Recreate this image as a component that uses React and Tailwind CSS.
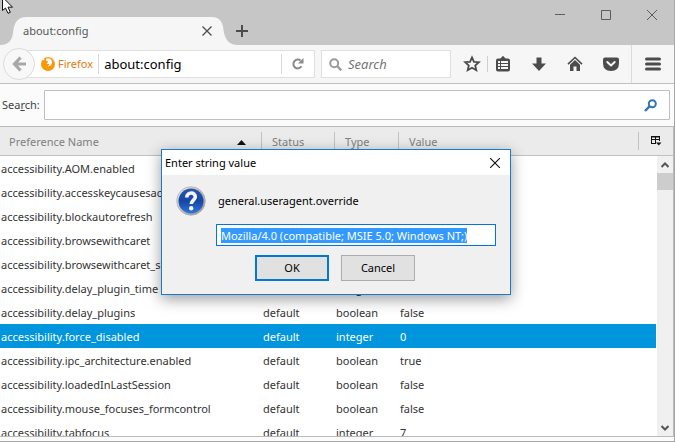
import { useEffect, useRef } from 'react';

const rows = [
  ['accessibility.AOM.enabled', 'default', 'boolean', 'false'],
  ['accessibility.accesskeycausesactivation', 'default', 'boolean', 'true'],
  ['accessibility.blockautorefresh', 'default', 'boolean', 'false'],
  ['accessibility.browsewithcaret', 'default', 'boolean', 'false'],
  ['accessibility.browsewithcaret_shortcut.enabled', 'default', 'boolean', 'true'],
  ['accessibility.delay_plugin_time', 'default', 'integer', '10000'],
  ['accessibility.delay_plugins', 'default', 'boolean', 'false'],
  ['accessibility.force_disabled', 'default', 'integer', '0'],
  ['accessibility.ipc_architecture.enabled', 'default', 'boolean', 'true'],
  ['accessibility.loadedInLastSession', 'default', 'boolean', 'false'],
  ['accessibility.mouse_focuses_formcontrol', 'default', 'boolean', 'false'],
  ['accessibility.tabfocus', 'default', 'integer', '7'],
];

function TitleBar() {
  return (
    <header className="flex h-[45px] shrink-0 items-end bg-[#c6c6c6]">
      <div className="relative flex h-7 w-[238px] items-center pr-[26px] pl-[23px]">
        <svg className="absolute inset-0" width="238" height="28" aria-hidden="true">
          <path d="M0 28C8 28 12 24 13 16C14 6 17 0 27 0H211C221 0 223 6 224 16C226 24 230 28 238 28Z" fill="#f6f6f6" />
        </svg>
        <span className="relative flex-1 text-[11px] leading-4 text-[#555]">about:config</span>
        <button className="relative" aria-label="Close tab">
          <svg width="10" height="10" viewBox="0 0 10 10" className="block" stroke="#4c4c4c" strokeWidth="1.3"><path d="M0.5 .5L9.5 9.5M9.5 .5L.5 9.5" /></svg>
        </button>
      </div>
      <button className="mb-2 -ml-0.5" aria-label="New tab">
        <svg width="12" height="12" className="block" stroke="#4c4c4c" strokeWidth="2"><path d="M6 0V12M0 6H12" /></svg>
      </button>
      <div className="ml-auto flex gap-9 self-start pt-[10px] pr-[17px]">
        <button aria-label="Minimize"><svg width="10" height="10" className="block" stroke="#5c5c5c"><path d="M0 4.5H10" /></svg></button>
        <button aria-label="Maximize"><svg width="10" height="10" className="block" stroke="#5c5c5c" fill="none"><path d="M.5 .5H9.5V9.5H.5Z" /></svg></button>
        <button aria-label="Close"><svg width="10" height="10" className="block" stroke="#5c5c5c"><path d="M0 0L10 10M10 0L0 10" /></svg></button>
      </div>
    </header>
  );
}

function Toolbar() {
  return (
    <nav className="flex h-[39px] shrink-0 items-center border-b border-[#c0c0c0] bg-[#f6f6f6] pl-[3px]">
      <button className="relative z-10 flex size-8 shrink-0 items-center justify-center rounded-full border border-[#dcdcdc] bg-[#f8f8f8]" aria-label="Back">
        <svg width="14" height="16" viewBox="0 0 14 16" fill="none" stroke="#a8a8a8" strokeWidth="3.2"><path d="M8.5 1.5L2.5 8L8.5 14.500M2.500 8H14" /></svg>
      </button>
      <div className="-ml-4 flex h-7 min-w-0 flex-1 items-center border border-[#e0e0e0] bg-white pl-[21px]">
        <svg width="14" height="14" viewBox="0 0 14 14" className="shrink-0">
          <circle cx="7" cy="7" r="7" fill="#fb9604" />
          <path d="M5.500 1.200C9.500 .8 11.500 3.500 11 6C10.600 8.500 8.500 9.500 6.500 9.200C7.500 8.800 8.300 8 8.200 7H6C5.500 6.400 6.300 5.500 7.500 5.200C7 4.300 6 4.300 5.300 4C4.800 3 5.300 2 5.500 1.200Z" fill="#fff" />
          <path d="M2 .8L3.800 2.500L2 3.500L1 2.800Z" fill="#fff" />
          <path d="M6 .8C9 .5 11.500 2 12.500 4L13.600 6" fill="none" stroke="#f9b84f" strokeWidth=".8" />
        </svg>
        <span className="ml-[3px] text-[11px] leading-4 text-[#e77a0c]">Firefox</span>
        <span className="ml-[5px] h-5 w-px shrink-0 bg-[#d8d8d8]" />
        <input aria-label="Address" className="ml-[5px] w-0 min-w-0 flex-1 bg-transparent text-[13px] leading-5 text-black outline-none" defaultValue="about:config" />
        <span className="h-5 w-px shrink-0 bg-[#d8d8d8]" />
        <button className="px-[10px]" aria-label="Reload">
          <svg width="12" height="12" viewBox="0 0 12 12" className="block"><path d="M9.500 8.300A4.400 4.400 0 1 1 8.600 2.600" fill="none" stroke="#8a8a8a" strokeWidth="2" /><path d="M11.500 0V5.500H6Z" fill="#8a8a8a" /></svg>
        </button>
      </div>
      <div className="ml-1.5 flex h-7 w-[130px] items-center gap-1.5 border border-[#e0e0e0] bg-white pl-[7px]">
        <svg width="13" height="13" viewBox="0 0 13 13" className="shrink-0" fill="none" stroke="#9b9b9b" strokeWidth="2"><circle cx="5.200" cy="5.200" r="4" /><path d="M8 8L12.300 12.300" strokeWidth="2.400" /></svg>
        <input aria-label="Search the web" placeholder="Search" className="w-0 min-w-0 flex-1 bg-transparent text-[13px] leading-5 italic outline-none placeholder:text-[#757575]" />
      </div>
      <button className="ml-3 shrink-0" aria-label="Bookmark">
        <svg width="18" height="18" viewBox="0 0 18 18" className="block" fill="none" stroke="#4c4c4c" strokeWidth="1.800" strokeLinejoin="miter"><path d="M9 2.500L11 6.800L15.800 7.200L12.200 10.500L13.300 15.200L9 12.700L4.700 15.200L5.800 10.500L2.200 7.200L7 6.800Z" /></svg>
      </button>
      <span className="ml-1.5 h-4 w-px bg-[#cfcfcf]" />
      <div className="ml-[7px] flex shrink-0 items-center gap-5">
        <button aria-label="Bookmarks list">
          <svg width="16" height="16" viewBox="0 0 16 16" className="block"><path d="M3 2.500H5C6 2.500 6.300 1 8 0C9.700 1 10 2.500 11 2.500H13Q15 2.500 15 4.500V13.500Q15 15.500 13 15.500H3Q1 15.500 1 13.500V4.500Q1 2.500 3 2.500Z" fill="#4c4c4c" /><path d="M3 5H5V7H3ZM6 5H13V7H6ZM3 8H5V10H3ZM6 8H13V10H6ZM3 11H5V13H3ZM6 11H13V13H6Z" fill="#f6f6f6" /></svg>
        </button>
        <button aria-label="Downloads">
          <svg width="16" height="16" viewBox="0 0 16 16" className="block"><path d="M5.500 1.500H10.500V7.500H15L8 15L1 7.500H5.500Z" fill="#4c4c4c" /></svg>
        </button>
        <button aria-label="Home">
          <svg width="16" height="16" viewBox="0 0 16 16" className="block"><path d="M1 8.200L8 1.500L15 8.200" fill="none" stroke="#4c4c4c" strokeWidth="1.600" /><path d="M3 8.800L8 4L13 8.800V15H9.500V10.500H6.500V15H3Z" fill="#4c4c4c" /></svg>
        </button>
        <button aria-label="Pocket">
          <svg width="16" height="16" viewBox="0 0 16 16" className="block"><path d="M2 1.500H14Q16 1.500 16 3.500V7Q16 15 8 15Q0 15 0 7V3.500Q0 1.500 2 1.500Z" fill="#4c4c4c" /><path d="M4.300 6L8 9.500L11.700 6" fill="none" stroke="#f6f6f6" strokeWidth="2" strokeLinecap="round" strokeLinejoin="round" /></svg>
        </button>
      </div>
      <span className="ml-3 h-full w-px bg-[#dadada]" />
      <button className="mr-[13px] ml-[13px] shrink-0" aria-label="Menu">
        <svg width="16" height="14" className="block" stroke="#4c4c4c" strokeWidth="3" strokeLinecap="round"><path d="M1.500 2H14.500M1.500 7H14.500M1.500 12H14.500" /></svg>
      </button>
    </nav>
  );
}

const headCell = 'border-b border-[#c0c0c0] p-0 font-normal';
const headLabel = 'flex h-[18px] items-center border-r border-[#c3c3c3] pt-0.5 pl-[10px]';
const cell = 'p-0 pt-px pl-px';

function PrefTable() {
  return (
    <main className="relative min-h-0 flex-1 overflow-hidden border-y border-r border-[#b9b9b9] bg-white">
      <table className="w-full table-fixed border-separate border-spacing-0 text-left text-[11px] leading-4">
        <colgroup>
          <col className="w-[262px]" />
          <col className="w-[73px]" />
          <col className="w-[64px]" />
          <col />
          <col className="w-[34px]" />
        </colgroup>
        <thead>
          <tr className="h-[29px] bg-[#ebebeb] text-[#808080]">
            <th className={headCell}>
              <div className="flex h-[18px] items-center justify-between border-r border-[#c3c3c3] pt-0.5 pr-[15px] pl-[9px]">
                Preference Name
                <svg width="9" height="5" aria-label="Sorted ascending"><path d="M0 5L4.500 0L9 5Z" fill="#111" /></svg>
              </div>
            </th>
            <th className={headCell}><div className={headLabel}>Status</div></th>
            <th className={headCell}><div className={headLabel}>Type</div></th>
            <th className={headCell}><div className={headLabel}>Value</div></th>
            <th className={headCell}>
              <button className="mx-auto block" aria-label="Select columns to display">
                <svg width="11" height="10" viewBox="0 0 11 10" className="block"><path d="M.5 7.500V1H8.500V5M.5 3.500H8.500M4.500 1V7.500M0 7.500H5" fill="none" stroke="#111" /><path d="M0 .5H9" stroke="#111" /><path d="M5 6.500H10.500L7.750 9.500Z" fill="#111" /></svg>
              </button>
            </th>
          </tr>
        </thead>
        <tbody>
          {rows.map(([name, status, type, value]) => (
            <tr key={name} className={name === 'accessibility.force_disabled' ? 'h-6 bg-[#0095dd] text-white' : 'h-6 text-[#333]'}>
              <td className={cell + ' overflow-hidden whitespace-nowrap'}>{name}</td>
              <td className={cell}>{status}</td>
              <td className={cell}>{type}</td>
              <td className={cell}>{value}</td>
              <td className="p-0" />
            </tr>
          ))}
        </tbody>
      </table>
      <div className="absolute top-[29px] right-0 bottom-0 flex w-[17px] flex-col items-center border-l border-white bg-[#f0f0f0]">
        <button className="flex h-[17px] items-center" aria-label="Scroll up"><svg width="8" height="6" fill="none" stroke="#555" strokeWidth="2"><path d="M.5 5L4 1.500L7.500 5" /></svg></button>
        <div className="h-[17px] w-full bg-[#cdcdcd]" />
        <button className="mt-auto flex h-[17px] items-center" aria-label="Scroll down"><svg width="8" height="6" fill="none" stroke="#555" strokeWidth="2"><path d="M.5 1L4 4.500L7.500 1" /></svg></button>
      </div>
    </main>
  );
}

function PromptDialog() {
  const field = useRef(null);
  useEffect(() => {
    field.current.focus();
    field.current.select();
  }, []);
  return (
    <div role="dialog" aria-labelledby="prompt-title" className="absolute top-[149px] left-[161px] z-20 w-[350px] border border-[#1979ca] bg-[#f0f0f0] text-[11px] leading-4 text-black shadow-[0_4px_14px_rgba(0,0,0,0.4)]">
      <div className="flex h-[25px] items-center justify-between bg-white pr-[10px] pl-[3px]">
        <h1 id="prompt-title">Enter string value</h1>
        <button aria-label="Close dialog"><svg width="10" height="10" className="block" stroke="#111" strokeWidth="1.100"><path d="M0 0L10 10M10 0L0 10" /></svg></button>
      </div>
      <div className="flex items-center gap-3 pt-[11px] pl-[14px]">
        <svg width="30" height="30" viewBox="0 0 30 30">
          <defs>
            <linearGradient id="badge" x1="0" y1="0" x2="0" y2="1"><stop offset="0" stopColor="#2a55ab" /><stop offset=".5" stopColor="#1646a5" /><stop offset="1" stopColor="#2f75dc" /></linearGradient>
            <linearGradient id="rim" x1="0" y1="0" x2="1" y2="1"><stop offset="0" stopColor="#eee" /><stop offset="1" stopColor="#8e8e8e" /></linearGradient>
          </defs>
          <circle cx="15" cy="15" r="14.300" fill="url(#rim)" stroke="#aaa" strokeWidth=".7" />
          <circle cx="15" cy="15" r="12.500" fill="url(#badge)" />
          <path d="M10.800 11.500C11 5.500 19.500 5.800 19.300 11C19.200 14 15.300 14.200 15.200 18" fill="none" stroke="#f4f4f4" strokeWidth="3.600" />
          <circle cx="15.200" cy="22.300" r="2.200" fill="#f4f4f4" />
        </svg>
        <label htmlFor="pref-value">general.useragent.override</label>
      </div>
      <div className="pt-2 pl-[54px]">
        <input id="pref-value" ref={field} className="block h-[22px] w-[280px] border border-[#0078d7] bg-white px-1 text-[11px] leading-[17px] outline-none selection:bg-[#3399ff] selection:text-white" defaultValue="Mozilla/4.0 (compatible; MSIE 5.0; Windows NT;)" />
      </div>
      <div className="flex gap-3 pt-[9px] pb-[13px] pl-[93px]">
        <button className="h-[26px] w-[74px] border-2 border-[#0078d7] bg-[#e1e1e1]">OK</button>
        <button className="h-[26px] w-[74px] border border-[#adadad] bg-[#e1e1e1]">Cancel</button>
      </div>
    </div>
  );
}

export default function App() {
  return (
    <div className="relative flex h-screen flex-col overflow-hidden bg-[#a6a9a6] pr-px pb-px font-['Noto_Sans','Open_Sans',sans-serif]">
      <div className="flex min-h-0 flex-1 flex-col bg-[#fbfbfb] pb-1">
        <TitleBar />
        <Toolbar />
        <form className="flex h-[42px] shrink-0 items-center gap-1 pr-1 pl-0.5 text-[11px] leading-4 text-[#424242]">
          <label htmlFor="filter" className="w-[38px]">Sea<u>r</u>ch:</label>
          <div className="flex h-[30px] min-w-0 flex-1 items-center rounded-[1px] border border-[#bfbfbf] bg-white pr-3">
            <input id="filter" type="text" className="h-full min-w-0 flex-1 bg-transparent px-2 outline-none" />
            <svg width="13" height="13" viewBox="0 0 13 13" fill="none" stroke="#3174b5" strokeWidth="2"><circle cx="8.300" cy="4.700" r="3.500" /><path d="M5.800 7.200L1 12" strokeWidth="2.400" /></svg>
          </div>
        </form>
        <PrefTable />
      </div>
      <PromptDialog />
      <svg className="absolute top-0 left-0 z-30" width="15" height="15" viewBox="0 0 15 15" aria-hidden="true">
        <path d="M2.500 -3V10.500L5.500 8L8 13.300L10.300 12.300L8 7.200H12.500Z" fill="#fff" stroke="#111" />
      </svg>
    </div>
  );
}
